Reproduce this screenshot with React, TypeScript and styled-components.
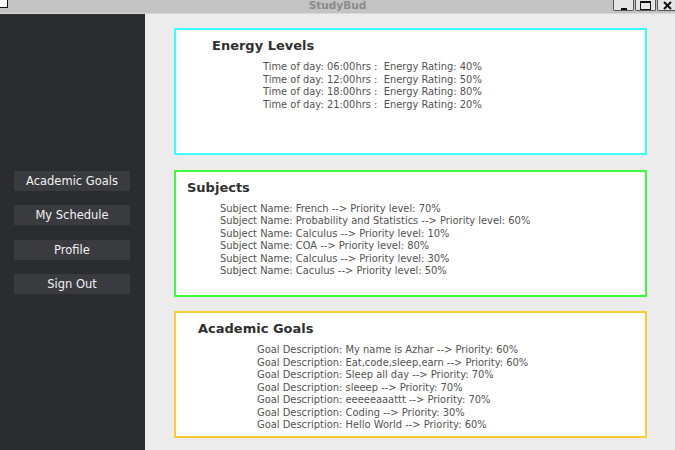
import React from "react";
import styled, { createGlobalStyle } from "styled-components";

const GlobalStyle = createGlobalStyle`
  html, body { margin: 0; padding: 0; background: #ececec; }
  body { font-family: "DejaVu Sans", sans-serif; }
`;

const Window = styled.div`
  width: 675px;
  height: 450px;
  display: flex;
  flex-direction: column;
  overflow: hidden;
`;

const TitleBar = styled.div`
  height: 13px;
  flex: 0 0 13px;
  background: #c3c3c3;
  border-bottom: 1px solid #d8d8d8;
  display: flex;
  align-items: flex-start;
  justify-content: space-between;
  position: relative;
  overflow: hidden;
`;

const WinIcon = styled.div`
  width: 7px;
  height: 7px;
  background: #ffffff;
  border-right: 1px solid #111;
  border-bottom: 1px solid #111;
`;

const WinTitle = styled.div`
  position: absolute;
  left: 0;
  right: 0;
  top: 0;
  text-align: center;
  font-family: "DejaVu Sans", sans-serif;
  font-weight: bold;
  font-size: 10.5px;
  line-height: 10px;
  color: #8a8a8a;
  pointer-events: none;
`;

const WinButtons = styled.div`
  display: flex;
  gap: 1px;
  margin-right: -3px;
`;

const WinButton = styled.div`
  box-sizing: border-box;
  width: 21px;
  height: 11px;
  background: #e6e6e6;
  border: 1px solid #555;
  border-top: none;
  border-radius: 0 0 2px 2px;
  display: flex;
  align-items: center;
  justify-content: center;
`;

const Body = styled.div`
  flex: 1;
  display: flex;
  min-height: 0;
`;

const Sidebar = styled.nav`
  width: 145px;
  flex: 0 0 145px;
  background: #2b2c2e;
  display: flex;
  flex-direction: column;
  align-items: center;
  justify-content: center;
  gap: 14.5px;
  padding-top: 1px;
`;

const NavButton = styled.div`
  width: 116px;
  height: 20px;
  margin-left: -1px;
  background: #3a3b3e;
  color: #f2f2f2;
  font-family: "DejaVu Sans", sans-serif;
  font-size: 11.5px;
  display: flex;
  align-items: center;
  justify-content: center;
`;

const Main = styled.main`
  flex: 1;
  background: #ececec;
  padding: 14px 28px 0 29px;
  display: flex;
  flex-direction: column;
  gap: 14.5px;
`;

const Card = styled.section<{ $color: string }>`
  box-sizing: border-box;
  height: 127px;
  background: #ffffff;
  border: 2px solid ${(p) => p.$color};
  display: flex;
  flex-direction: column;
  padding-top: 6px;
`;

const CardTitle = styled.h2<{ $indent: number }>`
  margin: 0 0 5px 0;
  padding-left: ${(p) => p.$indent}px;
  font-family: "DejaVu Sans", sans-serif;
  font-weight: bold;
  font-size: 13px;
  line-height: 20px;
  color: #303030;
`;

const Lines = styled.div<{ $indent: number }>`
  padding-left: ${(p) => p.$indent}px;
  display: flex;
  flex-direction: column;
`;

const Line = styled.div`
  font-family: "DejaVu Sans", sans-serif;
  font-stretch: condensed;
  font-size: 11px;
  line-height: 12.5px;
  color: #525252;
  white-space: pre;
`;

const energy = [
  "Time of day: 06:00hrs :  Energy Rating: 40%",
  "Time of day: 12:00hrs :  Energy Rating: 50%",
  "Time of day: 18:00hrs :  Energy Rating: 80%",
  "Time of day: 21:00hrs :  Energy Rating: 20%",
];

const subjects = [
  "Subject Name: French --> Priority level: 70%",
  "Subject Name: Probability and Statistics --> Priority level: 60%",
  "Subject Name: Calculus --> Priority level: 10%",
  "Subject Name: COA --> Priority level: 80%",
  "Subject Name: Calculus --> Priority level: 30%",
  "Subject Name: Caculus --> Priority level: 50%",
];

const goals = [
  "Goal Description: My name is Azhar --> Priority: 60%",
  "Goal Description: Eat,code,sleep,earn --> Priority: 60%",
  "Goal Description: Sleep all day --> Priority: 70%",
  "Goal Description: sleeep --> Priority: 70%",
  "Goal Description: eeeeeaaattt --> Priority: 70%",
  "Goal Description: Coding --> Priority: 30%",
  "Goal Description: Hello World --> Priority: 60%",
];

const nav = ["Academic Goals", "My Schedule", "Profile", "Sign Out"];

export default function App() {
  return (
    <>
      <GlobalStyle />
      <Window>
        <TitleBar>
          <WinIcon />
          <WinTitle>StudyBud</WinTitle>
          <WinButtons>
            <WinButton>
              <svg width="8" height="9" viewBox="0 0 8 9">
                <rect x="1" y="7" width="6" height="2" fill="#111" />
              </svg>
            </WinButton>
            <WinButton>
              <svg width="11" height="9" viewBox="0 0 11 9">
                <rect x="0.5" y="0.5" width="10" height="8" fill="none" stroke="#111" strokeWidth="1" />
                <rect x="0.5" y="0.5" width="10" height="1.5" fill="#111" />
              </svg>
            </WinButton>
            <WinButton>
              <svg width="9" height="9" viewBox="0 0 9 9">
                <path d="M1 1 L8 8 M8 1 L1 8" stroke="#111" strokeWidth="2" />
              </svg>
            </WinButton>
          </WinButtons>
        </TitleBar>
        <Body>
          <Sidebar>
            {nav.map((n) => (
              <NavButton key={n}>{n}</NavButton>
            ))}
          </Sidebar>
          <Main>
            <Card $color="#3cfcfc">
              <CardTitle $indent={36}>Energy Levels</CardTitle>
              <Lines $indent={87}>
                {energy.map((l) => (
                  <Line key={l}>{l}</Line>
                ))}
              </Lines>
            </Card>
            <Card $color="#3cfc3c">
              <CardTitle $indent={11}>Subjects</CardTitle>
              <Lines $indent={44}>
                {subjects.map((l) => (
                  <Line key={l}>{l}</Line>
                ))}
              </Lines>
            </Card>
            <Card $color="#fccc2c">
              <CardTitle $indent={22}>Academic Goals</CardTitle>
              <Lines $indent={81}>
                {goals.map((l, i) => (
                  <Line key={i}>{l}</Line>
                ))}
              </Lines>
            </Card>
          </Main>
        </Body>
      </Window>
    </>
  );
}
